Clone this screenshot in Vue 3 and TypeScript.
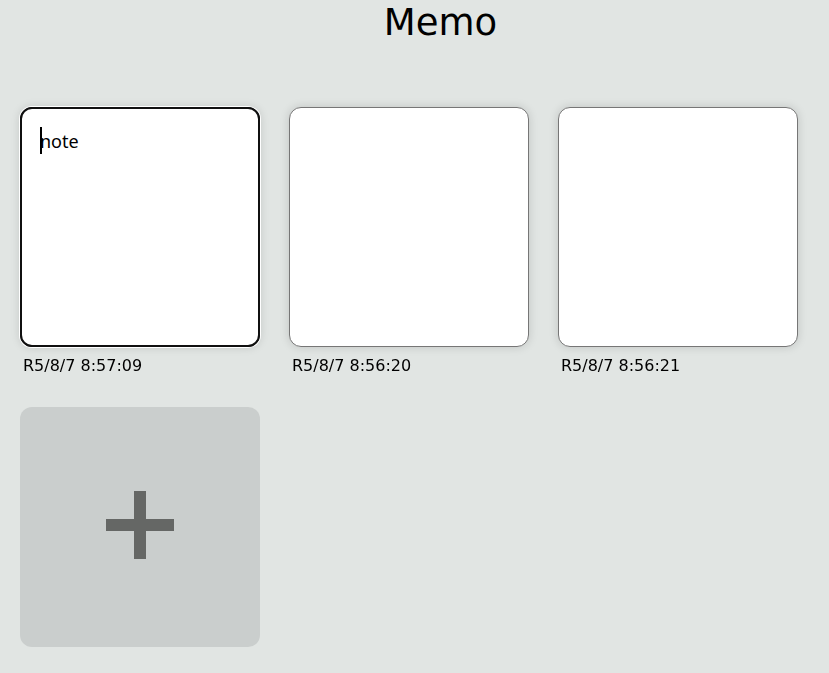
<script setup lang="ts">
import { nextTick, onMounted, ref } from 'vue'

interface Memo {
  id: number
  text: string
  time: string
}

const memos = ref<Memo[]>([
  { id: 1, text: 'note', time: 'R5/8/7 8:57:09' },
  { id: 2, text: '', time: 'R5/8/7 8:56:20' },
  { id: 3, text: '', time: 'R5/8/7 8:56:21' },
])
const grid = ref<HTMLElement | null>(null)
// Id of the memo whose cursor still rests before its first letter.
const restingId = ref<number | null>(1)

function stamp(): string {
  const now = new Date()
  const two = (n: number) => String(n).padStart(2, '0')
  return `R${now.getFullYear() - 2018}/${now.getMonth() + 1}/${now.getDate()} ${now.getHours()}:${two(now.getMinutes())}:${two(now.getSeconds())}`
}

function release() {
  restingId.value = null
}

async function addMemo() {
  memos.value.push({ id: Date.now(), text: '', time: stamp() })
  await nextTick()
  const areas = grid.value?.querySelectorAll('textarea')
  areas?.[areas.length - 1]?.focus()
}

onMounted(() => {
  const first = grid.value?.querySelector('textarea')
  first?.focus()
  first?.setSelectionRange(0, 0)
})
</script>

<template>
  <div class="page">
    <h1 class="title">Memo</h1>
    <main ref="grid" class="grid">
      <div v-for="memo in memos" :key="memo.id" class="memo" :class="{ resting: memo.id === restingId }">
        <textarea
          :id="`memo-${memo.id}`"
          v-model="memo.text"
          class="note"
          spellcheck="false"
          @keydown="release"
          @pointerdown="release"
          @blur="release"
        ></textarea>
        <label :for="`memo-${memo.id}`" class="time">{{ memo.time }}</label>
      </div>
      <button class="add" type="button" aria-label="Add memo" @click="addMemo">
        <svg class="plus" viewBox="0 0 68 68" aria-hidden="true">
          <path d="M28 0h12v28h28v12H40v28H28V40H0V28h28z" fill="currentColor" />
        </svg>
      </button>
    </main>
  </div>
</template>

<style>
body {
  background: #e1e5e3;
}
</style>

<style scoped>
.page {
  font-family: "DejaVu Sans", Verdana, sans-serif;
  color: #000;
}
.title {
  margin: 0;
  padding-left: 52px;
  font-size: 37px;
  line-height: 46px;
  font-weight: 400;
  text-align: center;
}
.grid {
  display: grid;
  grid-template-columns: repeat(auto-fill, 240px);
  gap: 29px;
  padding: 61px 20px 26px;
}
.memo {
  position: relative;
  display: flex;
  flex-direction: column;
  gap: 6px;
}
.note {
  box-sizing: border-box;
  height: 240px;
  padding: 19px;
  border: 1px solid #767676;
  border-radius: 12px;
  background: #fff;
  box-shadow: 0 0 10px rgba(0, 0, 0, 0.15);
  font-family: "Noto Sans", "Open Sans", sans-serif;
  font-size: 18px;
  line-height: 28px;
  color: #000;
  resize: none;
}
.note:focus {
  border-color: #101010;
  outline: 2px solid #101010;
  outline-offset: -2px;
  box-shadow: 0 0 0 1px #fff, 0 0 10px rgba(0, 0, 0, 0.15);
}
.resting .note {
  caret-color: transparent;
}
.resting::before {
  content: "";
  position: absolute;
  top: 20px;
  left: 20px;
  width: 2px;
  height: 27px;
  background: #000;
}
.time {
  padding-left: 3px;
  font-size: 16px;
  line-height: 25px;
}
.add {
  box-sizing: border-box;
  display: grid;
  place-items: center;
  height: 240px;
  padding: 0 0 4px;
  border: 0;
  border-radius: 12px;
  background: #cacecd;
  color: #656765;
  cursor: pointer;
}
.plus {
  width: 68px;
  height: 68px;
}
</style>
